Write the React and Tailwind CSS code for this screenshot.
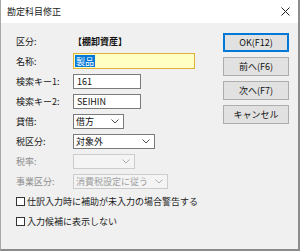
import React from "react";

const Chevron = ({ color = "#606060" }) => (
  <svg width="8" height="5" viewBox="0 0 8 5" className="shrink-0">
    <path d="M0.5 0.5 L4 4 L7.5 0.5" fill="none" stroke={color} strokeWidth="1" />
  </svg>
);

const Row = ({ label, gray, children }) => (
  <div className="h-[20px] flex items-center">
    <div className={`w-[57px] shrink-0 ${gray ? "text-[#8d8d8d]" : "text-[#1a1a1a]"}`}>{label}</div>
    {children}
  </div>
);

const Select = ({ w, text, disabled }) => (
  <div
    className={`h-[15px] flex items-center justify-between pl-[2px] pr-[4px] border ${
      disabled ? "border-[#cccccc] bg-[#f4f4f4] text-[#a0a0a0]" : "border-[#7a7a7a] bg-white text-[#111]"
    } ${w}`}
  >
    <span className="leading-none">{text}</span>
    <Chevron color={disabled ? "#b0b0b0" : "#505050"} />
  </div>
);

const Check = ({ text }) => (
  <div className="h-[20px] flex items-center">
    <div className="w-[9px] h-[9px] border border-[#333] bg-white shrink-0" />
    <span className="ml-[2px] text-[#1a1a1a]">{text}</span>
  </div>
);

const Btn = ({ children, primary }) => (
  <div
    className={`h-[19px] w-[66px] flex items-center justify-center bg-[#e1e1e1] text-[#111] ${
      primary ? "border-2 border-[#0078d7]" : "border border-[#adadad]"
    }`}
  >
    {children}
  </div>
);

export default function App() {
  return (
    <div className="w-[300px] h-[251px] flex flex-col font-['Noto_Sans_CJK_JP','Noto_Sans',sans-serif] text-[9px] leading-none border-l border-l-[#a8a8a8] border-r-2 border-r-[#8c8c8c] border-b-2 border-b-[#8c8c8c] overflow-hidden">
      <div className="h-[23px] bg-white flex items-center justify-between pl-[6px] pr-[8px] shrink-0">
        <span className="text-[#222] text-[9px]">勘定科目修正</span>
        <svg width="9" height="9" viewBox="0 0 9 9">
          <path d="M0.5 0.5 L8.5 8.5 M8.5 0.5 L0.5 8.5" stroke="#222" strokeWidth="1" />
        </svg>
      </div>
      <div className="flex-1 bg-[#f0f0f0] flex">
        <div className="w-[222px] pl-[15px] pt-[8px] flex flex-col">
          <Row label="区分:">
            <span className="font-bold text-[#111]">【棚卸資産】</span>
          </Row>
          <Row label="名称:">
            <div className="h-[16px] w-[122px] border border-[#e0b13c] bg-[#ffffc4] flex items-center pl-[1px]">
              <span className="bg-[#0078d7] text-white px-[1px] h-[12px] flex items-center">製品</span>
            </div>
          </Row>
          <Row label="検索キー1:">
            <div className="h-[15px] w-[68px] border border-[#7a7a7a] bg-white flex items-center pl-[3px] text-[#111]">161</div>
          </Row>
          <Row label="検索キー2:">
            <div className="h-[15px] w-[68px] border border-[#7a7a7a] bg-white flex items-center pl-[3px] text-[#111]">SEIHIN</div>
          </Row>
          <Row label="貸借:">
            <Select w="w-[51px]" text="借方" />
          </Row>
          <Row label="税区分:">
            <Select w="w-[82px]" text="対象外" />
          </Row>
          <Row label="税率:" gray>
            <Select w="w-[62px]" text="" disabled />
          </Row>
          <Row label="事業区分:" gray>
            <Select w="w-[95px]" text="消費税設定に従う" disabled />
          </Row>
          <Check text="仕訳入力時に補助が未入力の場合警告する" />
          <Check text="入力候補に表示しない" />
        </div>
        <div className="pt-[10px] flex flex-col gap-[5px]">
          <Btn primary>OK(F12)</Btn>
          <Btn>前へ(F6)</Btn>
          <Btn>次へ(F7)</Btn>
          <Btn>キャンセル</Btn>
        </div>
      </div>
    </div>
  );
}
